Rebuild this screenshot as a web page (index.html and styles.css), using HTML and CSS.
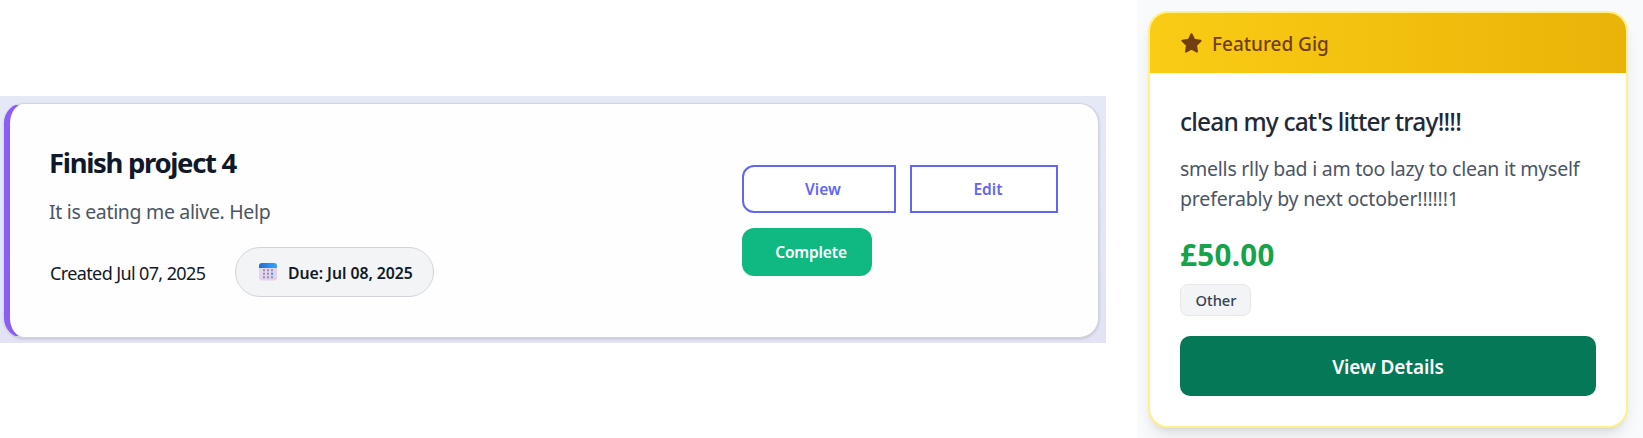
FILE: index.html
```html
<!DOCTYPE html>
<html lang="en">
<head>
<meta charset="utf-8">
<title>Project and gig cards</title>
<link rel="stylesheet" href="styles.css">
</head>
<body>
<main class="page">
  <section class="project-panel">
    <article class="project">
      <div class="project-info">
        <h2 class="project-title"><span>Finish project 4</span></h2>
        <p class="project-text"><span>It is eating me alive. Help</span></p>
        <div class="meta">
          <span class="created">Created Jul 07, 2025</span>
          <span class="due">
            <svg class="calendar" viewBox="0 0 18 18" aria-hidden="true">
              <defs><linearGradient id="top"><stop stop-color="#2469d9"/><stop offset="1" stop-color="#2fa8ff"/></linearGradient>
              <linearGradient id="sheet" x2="1" y2="1"><stop stop-color="#dfdcf2"/><stop offset="1" stop-color="#e5cdea"/></linearGradient></defs>
              <rect width="18" height="17.5" rx="3" fill="url(#sheet)"/>
              <path d="M0 5V3a3 3 0 0 1 3-3h12a3 3 0 0 1 3 3v2z" fill="url(#top)"/>
              <path d="M4 6.3h2v2H4zM8 6.3h2v2H8zM12 6.3h2v2h-2zM4 9.8h2v2H4zM8 9.8h2v2H8zM4 13.3h2v2H4zM8 13.3h2v2H8zM12 13.3h2v2h-2z" fill="#9b8fae"/>
              <path d="M12 9.8h2v2h-2z" fill="#209cf5"/>
            </svg>
            <span class="due-text">Due: Jul 08, 2025</span>
          </span>
        </div>
      </div>
      <div class="actions">
        <button class="btn btn-view"><span>View</span></button>
        <button class="btn btn-edit"><span>Edit</span></button>
        <button class="btn btn-complete"><span>Complete</span></button>
      </div>
    </article>
  </section>
  <section class="gig-panel">
    <article class="gig">
      <header class="gig-head">
        <svg class="star" viewBox="0 0 21 20" aria-hidden="true"><path d="M10.5 1.2 13.2 6.8 19.6 7.7 15 12.2 16 18.6 10.5 15.7 5 18.6 6 12.2 1.4 7.7 7.8 6.8z" fill="#713f12" stroke="#713f12" stroke-width="2" stroke-linejoin="round"/></svg>
        <span class="featured">Featured Gig</span>
      </header>
      <div class="gig-body">
        <h2 class="gig-title">clean my cat's litter tray!!!!</h2>
        <p class="gig-text"><span class="line-a">smells rlly bad i am too lazy to clean it myself</span><br><span class="line-b">preferably by next october!!!!!!1</span></p>
        <div class="price">£50.00</div>
        <span class="tag">Other</span>
        <button class="details"><span>View Details</span></button>
      </div>
    </article>
  </section>
</main>
</body>
</html>
```
FILE: styles.css
```css
* { box-sizing: border-box; margin: 0; padding: 0; }
body { background: #fff; font-family: "Noto Sans", "Open Sans", sans-serif; overflow: hidden; }
button { font-family: inherit; border: 0; }
.page { display: flex; justify-content: space-between; align-items: center; width: 1643px; height: 438px; white-space: nowrap; }
.project-panel { width: 1106px; height: 247px; margin-top: 1px; padding: 7px 7px 5px 4px; background: linear-gradient(#e5e9f6, #e2e4f5); }
.project { display: flex; justify-content: space-between; width: 1095px; height: 235px; padding: 41px 40px 0 39px; background: #fefefe; border: 1px solid #d1d5db; border-left: 6px solid #8b5cf6; border-radius: 20px; box-shadow: 0 1px 3px rgba(0,0,0,.16); }
.project-title { height: 36px; line-height: 36px; font-size: 27.5px; font-weight: 700; color: #111827; letter-spacing: -1.33px; }
.project-text { height: 28px; margin-top: 17px; line-height: 28px; font-size: 19.5px; color: #4b5563; letter-spacing: -.33px; }
.meta { display: flex; align-items: center; gap: 30px; height: 50px; margin-top: 21px; }
.created { width: 156px; padding: 1px 0 0 1px; font-size: 18px; color: #111827; letter-spacing: -.62px; }
.due { display: flex; align-items: center; gap: 11px; width: 199px; height: 50px; padding-left: 23px; background: #f3f4f6; border: 1px solid #d1d5db; border-radius: 25px; }
.calendar { width: 18px; height: 18px; }
.due-text { padding-top: 2px; font-size: 15.8px; font-weight: 600; color: #111827; letter-spacing: -.05px; }
.actions { display: grid; grid-template-columns: 154px 148px; grid-auto-rows: 48px; column-gap: 14px; row-gap: 15px; padding-top: 20px; }
.btn { padding-left: 8px; font-size: 15.5px; font-weight: 600; background: #fff; border: 2px solid #6366f1; color: #6366f1; }
.btn-view { border-radius: 12px 0 0 12px; }
.btn-complete { width: 130px; padding-left: 8px; border: 0; border-radius: 12px; background: #10b981; color: #fff; letter-spacing: -.15px; }
.gig-panel { width: 506px; height: 438px; padding: 11px 0 0 11px; background: #f9fafb; overflow: hidden; }
.gig { width: 480px; height: 417px; border: 2px solid #fef08a; border-radius: 20px; overflow: hidden; background: #fff; box-shadow: 0 10px 15px -3px rgba(0,0,0,.1), 0 4px 6px -4px rgba(0,0,0,.1); }
.gig-head { display: flex; align-items: center; gap: 10px; height: 60px; padding-left: 31px; background: linear-gradient(90deg, #facc15, #eab308); }
.star { width: 21px; height: 20px; }
.featured { padding-top: 2px; font-size: 19px; font-weight: 500; color: #713f12; letter-spacing: -.02px; }
.gig-body { display: flex; flex-direction: column; align-items: flex-start; padding: 31px 30px 0; }
.gig-title { height: 36px; line-height: 36px; font-size: 24.5px; font-weight: 500; color: #1f2937; letter-spacing: -.83px; }
.gig-text { margin-top: 14px; line-height: 30px; font-size: 19.5px; color: #4b5563; letter-spacing: -.25px; }
.line-b { letter-spacing: -.17px; }
.price { height: 40px; margin-top: 21px; line-height: 40px; font-size: 29.5px; font-weight: 700; color: #16a34a; letter-spacing: .35px; }
.tag { display: flex; justify-content: center; align-items: center; width: 71px; height: 32px; margin-top: 9px; padding-left: 1px; font-size: 14.7px; font-weight: 500; color: #374151; background: #f3f4f6; border: 1px solid #e5e7eb; border-radius: 8px; }
.details { width: 416px; height: 60px; margin-top: 20px; padding-top: 2px; font-size: 19px; font-weight: 600; color: #fff; background: #047857; border-radius: 10px; letter-spacing: -.1px; }
```
